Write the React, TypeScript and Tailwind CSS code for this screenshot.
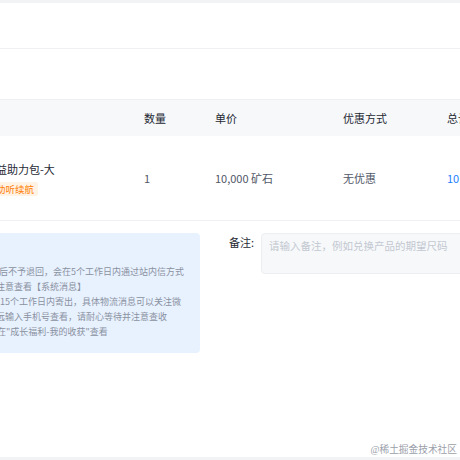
export default function App() {
  const cols = 'grid grid-cols-[144px_71px_128px_104px_1fr] items-center'
  const notes = [
    { text: '后不予退回，会在5个工作日内通过站内信方式', cut: '-ml-[1px]' },
    { text: '注意查看【系统消息】', cut: '-ml-[4px]' },
    { text: '15个工作日内寄出，具体物流消息可以关注微', cut: 'ml-0' },
    { text: '远输入手机号查看，请耐心等待并注意查收', cut: '-ml-[4px]' },
    { text: '在"成长福利-我的收获"查看', cut: '-ml-[3px]' },
  ]

  return (
    <div className="relative flex h-[460px] w-[460px] flex-col overflow-hidden bg-white font-['Noto_Sans_CJK_SC','Noto_Sans',sans-serif]">
      <div className="h-[3px] shrink-0 bg-[#f2f3f5]" />
      <div className="h-[46px] shrink-0 border-b border-[#eef0f3]" />
      <div className="h-[51px] shrink-0 border-b border-[#eef0f3]" />

      {/* table head */}
      <div className={`${cols} h-[36px] shrink-0 bg-[#f7f8fa] text-[11px] text-[#252933]`}>
        <span />
        <span>数量</span>
        <span>单价</span>
        <span>优惠方式</span>
        <span className="whitespace-nowrap">总计</span>
      </div>

      {/* table row */}
      <div className={`${cols} h-[85px] shrink-0 border-b border-[#eef0f3] text-[11px] text-[#515767]`}>
        <div className="flex flex-col items-start overflow-hidden">
          <span className="-ml-[4px] whitespace-nowrap leading-[16px] text-[#252933]">益助力包-大</span>
          <span className="mt-[5px] -ml-[4px] whitespace-nowrap rounded-[2px] bg-[#fff3e6] pl-0 pr-[4px] text-[9.5px] leading-[14px] text-[#ff7d00]">
            助听续航
          </span>
        </div>
        <span className="pt-[1px]">1</span>
        <span className="whitespace-nowrap pt-[1px]">10,000 矿石</span>
        <span className="pt-[1px]">无优惠</span>
        <span className="whitespace-nowrap pt-[1px] text-[#1e80ff]">10,000 矿石</span>
      </div>

      {/* notes + remark */}
      <div className="flex flex-1 items-start pt-[12px]">
        <div className="w-[200px] shrink-0 overflow-hidden rounded-r-[4px] bg-[#e8f2ff] pb-[14px] pt-[31px] text-[9px] leading-[15px] text-[#8a919f]">
          {notes.map((n) => (
            <div key={n.text} className={`${n.cut} whitespace-nowrap`}>
              {n.text}
            </div>
          ))}
        </div>
        <div className="ml-[29px] flex flex-1 items-start">
          <span className="mt-[1px] whitespace-nowrap text-[11px] leading-[16px] text-[#252933]">备注:</span>
          <div className="ml-[7px] -mr-[20px] h-[41px] flex-1 whitespace-nowrap rounded-[4px] border border-[#eceef2] bg-[#f7f8fa] px-[7px] pt-[4px] text-[10.5px] leading-[16px] text-[#c2c8d1]">
            请输入备注，例如兑换产品的期望尺码
          </div>
        </div>
      </div>

      <div className="h-[3px] shrink-0 bg-[#f2f3f5]" />

      <span className="absolute bottom-[3px] right-[3px] font-['Liberation_Serif','Noto_Sans_CJK_SC',serif] text-[9.7px] leading-[14px] text-[#9aa0aa]">
        @稀土掘金技术社区
      </span>
    </div>
  )
}
